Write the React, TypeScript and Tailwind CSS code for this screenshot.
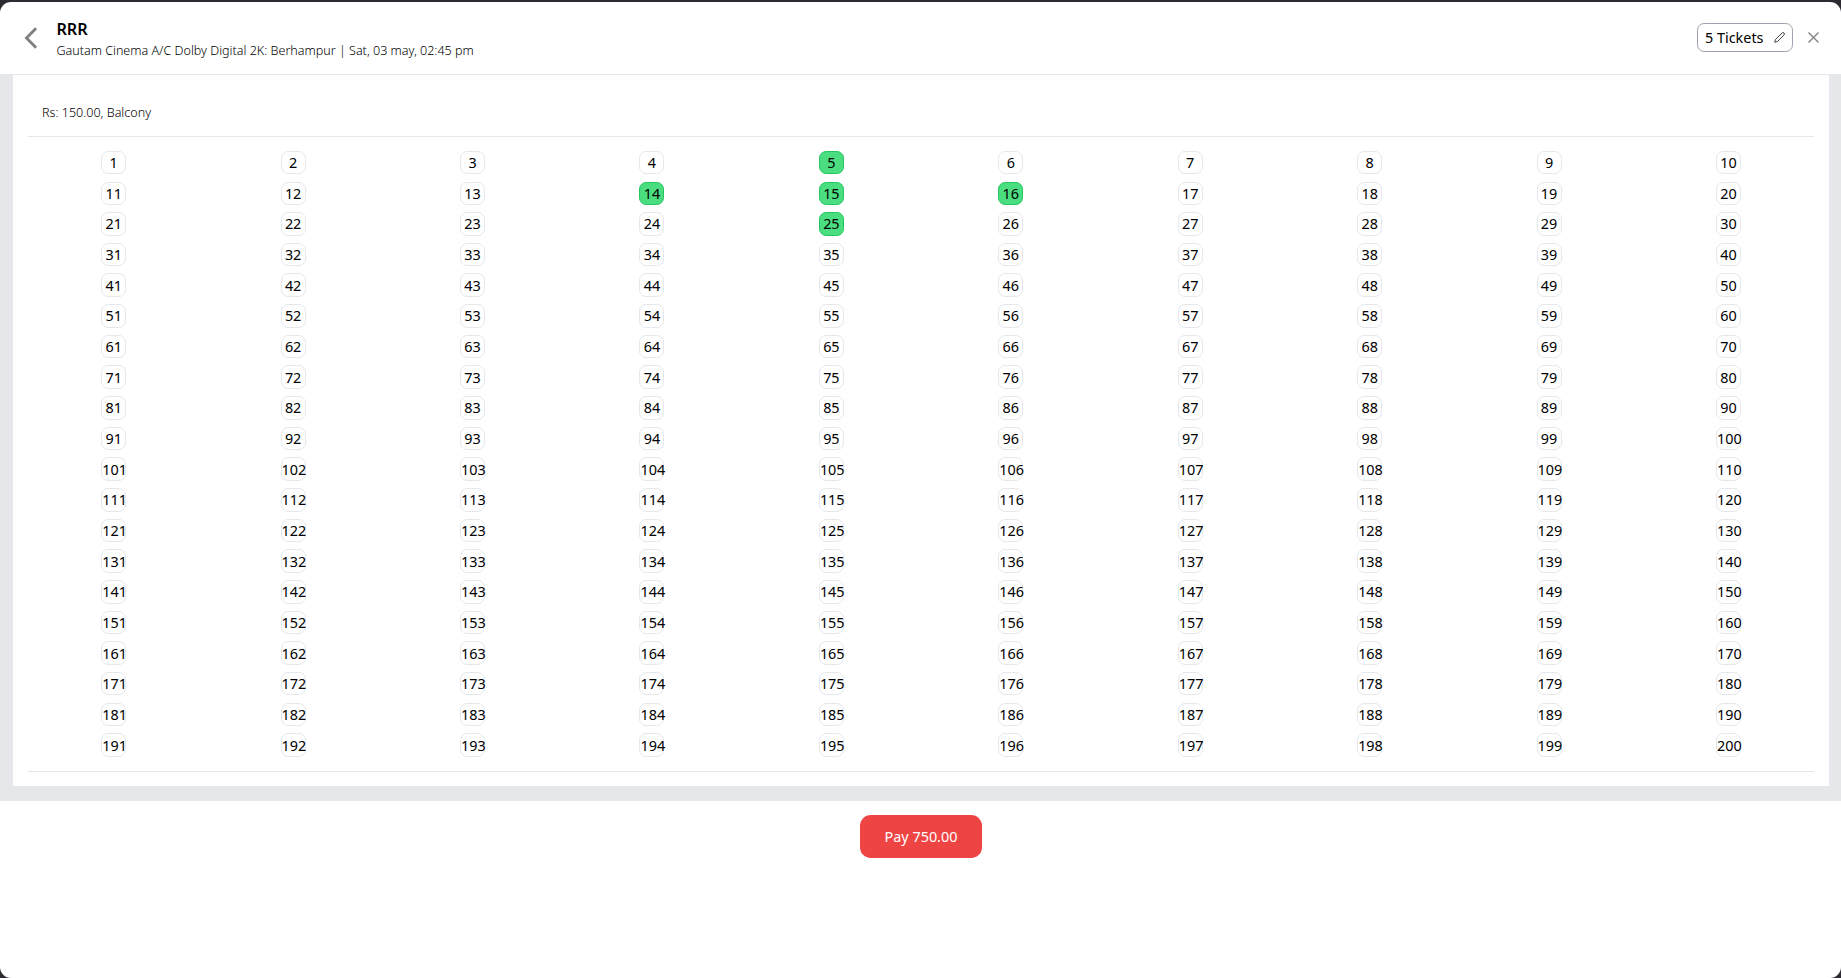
import React from "react";

const selected = new Set([5, 14, 15, 16, 25]);
const seats = Array.from({ length: 200 }, (_, i) => i + 1);

function Seat({ n }: { n: number }) {
  const state = selected.has(n)
    ? "border-[#22c55e] bg-[#4ade80]"
    : "border-[#e5e7eb] bg-white";
  return (
    <button
      className={`block h-[23.47px] w-[25px] whitespace-nowrap rounded-[7.2px] border px-0 pb-0 pt-[0.3px] text-center leading-[21.6px] ${state}`}
    >
      {n}
    </button>
  );
}

export default function App() {
  return (
    <div className="h-[978px] w-full overflow-hidden bg-[#2d2a32] pt-[2px] font-['Noto_Sans',sans-serif] text-[14.4px] leading-[21.6px] text-black">
      <div className="flex h-[976px] flex-col overflow-hidden rounded-[11px] bg-white">
        <header className="flex h-[73px] shrink-0 items-center border-b border-[#e5e7eb] pl-[24px] pr-[22.5px]">
          <svg className="h-[22px] w-[14px] shrink-0" viewBox="0 0 14 22" fill="none" stroke="#808080" strokeWidth="2.9">
            <path d="M12.1 1.2 2.5 11l9.6 9.8" />
          </svg>
          <div className="ml-[18.4px] flex-1 pt-[3px]">
            <h1 className="text-[16.2px] font-semibold leading-[22px]">RRR</h1>
            <p className="mt-px text-[12.55px] font-light leading-[20px]">
              Gautam Cinema A/C Dolby Digital 2K: Berhampur | Sat, 03 may, 02:45 pm
            </p>
          </div>
          <button className="-mt-px flex h-[29px] w-[96px] items-center rounded-[7.2px] border border-[#9ca3af] pl-[7px]">
            <span>5 Tickets</span>
            <svg className="ml-[11px] h-[11px] w-[11px]" viewBox="0 0 12 12" fill="none" stroke="#333" strokeWidth="1" strokeLinejoin="round">
              <path d="M.8 11.2l.8-3L8.8 1.1a1.45 1.45 0 0 1 2.1 2.1L3.8 10.4.8 11.2Z" />
            </svg>
          </button>
          <svg className="-mt-px ml-[14.5px] h-[11px] w-[11px]" viewBox="0 0 11 11" fill="none" stroke="#808080" strokeWidth="1.4">
            <path d="M.5.5l10 10M10.5.5l-10 10" />
          </svg>
        </header>
        <main className="shrink-0 bg-[#e5e7eb] pb-[15px] pl-[13px] pr-[12px]">
          <section className="h-[711px] bg-white px-[15px]">
            <div className="h-[62px] border-b border-[#e5e7eb] pl-[14px] pt-[27px] text-[12.55px] font-light">
              Rs: 150.00, Balcony
            </div>
            <div className="grid h-[635px] auto-rows-[23.47px] grid-cols-10 content-start justify-items-center gap-x-[8.4px] gap-y-[7.19px] border-b border-[#e5e7eb] pl-[0.2px] pt-[13.86px]">
              {seats.map((n) => (
                <Seat key={n} n={n} />
              ))}
            </div>
          </section>
        </main>
        <footer className="flex justify-center pt-[14px]">
          <button className="h-[43px] w-[122px] rounded-[10.8px] bg-[#ef4444] pl-px text-center text-white">Pay 750.00</button>
        </footer>
      </div>
    </div>
  );
}
